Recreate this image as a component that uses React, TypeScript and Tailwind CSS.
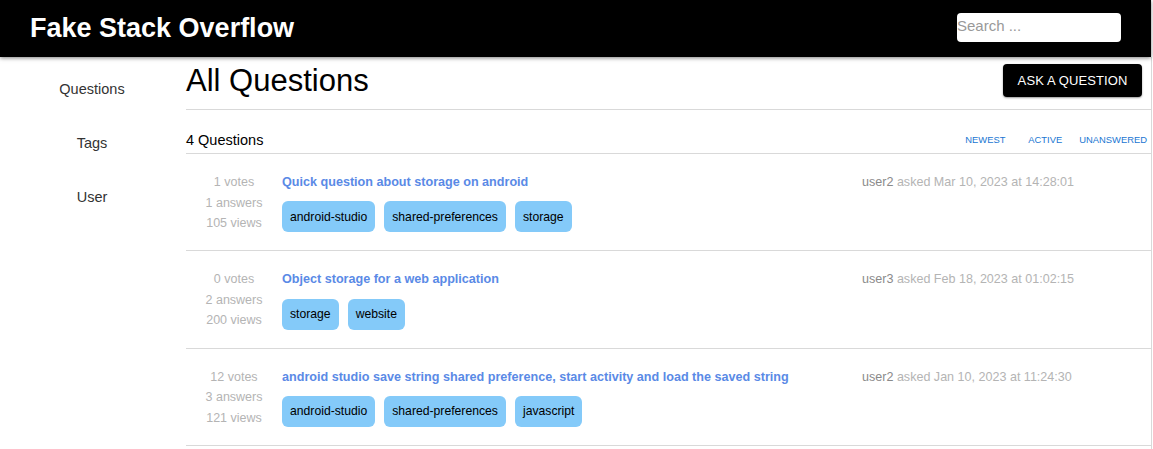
import React from 'react';

const QUESTIONS = [
  {
    votes: '1 votes',
    answers: '1 answers',
    views: '105 views',
    title: 'Quick question about storage on android',
    tags: ['android-studio', 'shared-preferences', 'storage'],
    user: 'user2',
    date: 'asked Mar 10, 2023 at 14:28:01',
  },
  {
    votes: '0 votes',
    answers: '2 answers',
    views: '200 views',
    title: 'Object storage for a web application',
    tags: ['storage', 'website'],
    user: 'user3',
    date: 'asked Feb 18, 2023 at 01:02:15',
  },
  {
    votes: '12 votes',
    answers: '3 answers',
    views: '121 views',
    title: 'android studio save string shared preference, start activity and load the saved string',
    tags: ['android-studio', 'shared-preferences', 'javascript'],
    user: 'user2',
    date: 'asked Jan 10, 2023 at 11:24:30',
  },
];

function QuestionRow({ q }: { q: (typeof QUESTIONS)[number] }) {
  return (
    <div className="flex h-[97.25px] border-b border-[#d9d9d9] pt-[18px]">
      <div className="w-[96px] pt-[2px] flex flex-col gap-[4px] text-[12.5px] leading-[16.5px] text-[#b4b4b4]">
        <div className="w-full text-center">{q.votes}</div>
        <div className="w-full text-center">{q.answers}</div>
        <div className="w-full text-center">{q.views}</div>
      </div>
      <div className="w-[580px]">
        <div className="text-[12.6px] leading-[20px] font-bold text-[#5a8ae6]">{q.title}</div>
        <div className="flex gap-[9px] mt-[9.3px]">
          {q.tags.map(tag => (
            <div key={tag} className="h-[31px] px-[8px] flex items-center rounded-[6px] bg-[#84caf9] text-[12.2px] text-black">
              {tag}
            </div>
          ))}
        </div>
      </div>
      <div className="text-[12.55px] leading-[20px] text-[#b4b4b4] whitespace-nowrap">
        <span className="text-[#8a8a8a]">{q.user}</span> {q.date}
      </div>
    </div>
  );
}

export default function App() {
  return (
    <div className="min-h-[449px] bg-white font-['Liberation_Sans',Arial,sans-serif] overflow-hidden">
      <header className="relative z-10 h-[57px] w-[1151px] bg-black flex items-center justify-between pl-[30px] pr-[30px] shadow-[0_1px_4px_rgba(0,0,0,0.5)]">
        <div className="text-[27px] font-bold text-white">Fake Stack Overflow</div>
        <input
          placeholder="Search ..."
          className="w-[164px] h-[29px] mb-[2px] rounded-[4px] bg-white pb-[5px] text-[15px] text-black placeholder:text-[#999] outline-none"
        />
      </header>
      <div className="flex">
        <nav className="w-[186px] shrink-0 flex flex-col text-[14.5px] text-[#333] pt-[22px] gap-[34px] pr-[2px]">
          <div className="h-[20px] leading-[20px] text-center">Questions</div>
          <div className="h-[20px] leading-[20px] text-center">Tags</div>
          <div className="h-[20px] leading-[20px] text-center">User</div>
        </nav>
        <main className="w-[966px] min-h-[392px] border-r border-[#d9d9d9]">
          <div className="flex items-start justify-between h-[53px] border-b border-[#d9d9d9] pr-[9px]">
            <h1 className="text-[31px] leading-[48px] text-black">All Questions</h1>
            <button className="h-[33px] w-[139px] mt-[7px] rounded-[4px] bg-black text-white text-[13px] tracking-[0.1px] font-medium shadow-[0_1px_2px_rgba(0,0,0,0.4)]">
              ASK A QUESTION
            </button>
          </div>
          <div className="flex items-end justify-between h-[44px] border-b border-[#d9d9d9] pb-[3px] pr-[4px]">
            <div className="text-[14.5px] leading-[20px] text-black">4 Questions</div>
            <div className="flex text-[9.4px] leading-[20px] text-[#1976d2]">
              <span className="w-[63px]">NEWEST</span>
              <span className="w-[51px]">ACTIVE</span>
              <span>UNANSWERED</span>
            </div>
          </div>
          {QUESTIONS.map(q => (
            <QuestionRow key={q.title} q={q} />
          ))}
        </main>
      </div>
    </div>
  );
}
